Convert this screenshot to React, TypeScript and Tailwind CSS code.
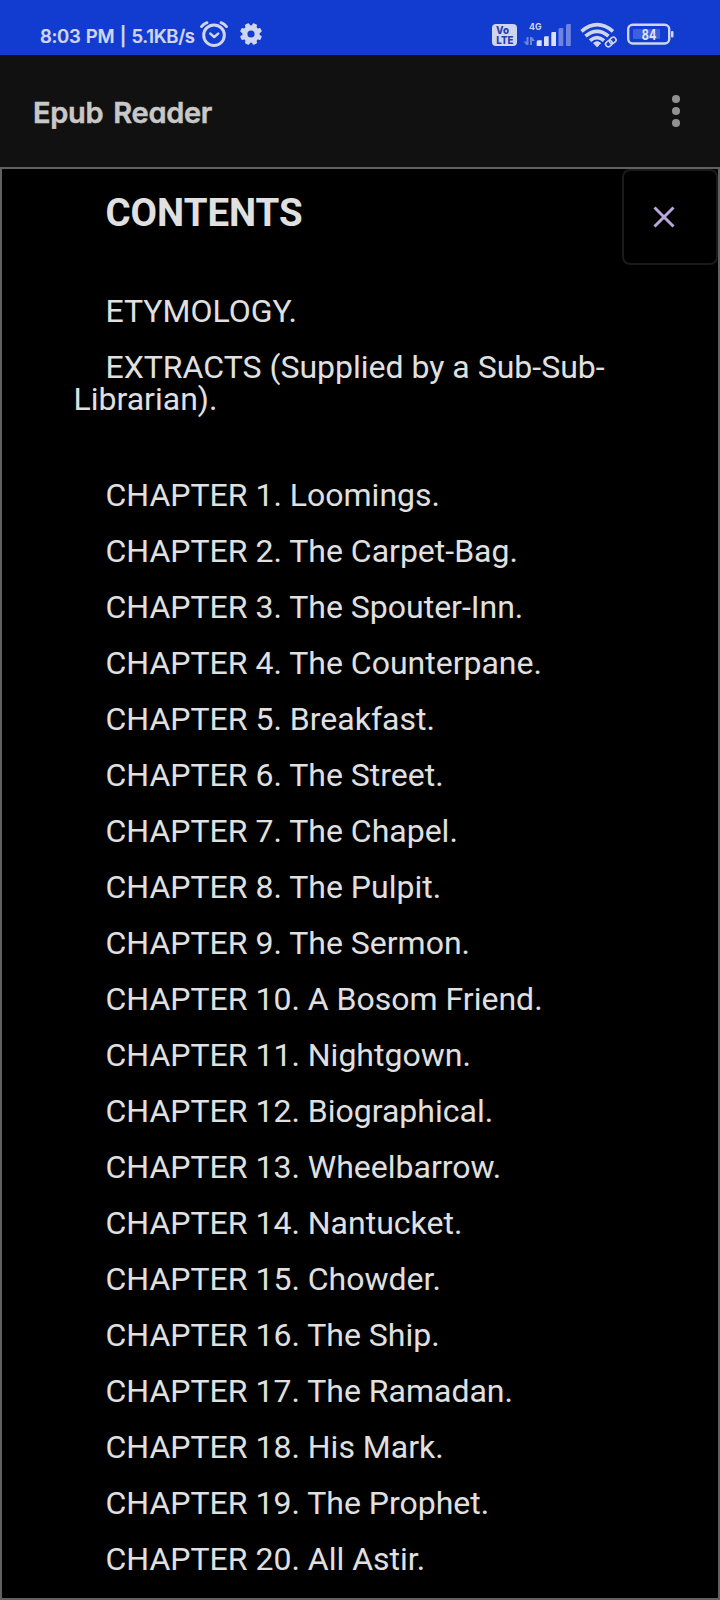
const chapters = [
  "Loomings.", "The Carpet-Bag.", "The Spouter-Inn.", "The Counterpane.", "Breakfast.",
  "The Street.", "The Chapel.", "The Pulpit.", "The Sermon.", "A Bosom Friend.",
  "Nightgown.", "Biographical.", "Wheelbarrow.", "Nantucket.", "Chowder.",
  "The Ship.", "The Ramadan.", "His Mark.", "The Prophet.", "All Astir.",
];

function AlarmIcon() {
  return (
    <svg className="ml-[5px] mt-[20px] h-[28px] w-[28px] shrink-0" viewBox="0 0 28 28" fill="none" stroke="currentColor" strokeLinecap="round">
      <circle cx="14" cy="15.2" r="10.3" strokeWidth="3" />
      <path d="M10.300 13.600l3.900 3.400 4-3.400" strokeWidth="2.500" strokeLinejoin="round" />
      <path d="M1.500 6.600Q3.500 3.800 7 2.600M26.500 6.600Q24.500 3.800 21 2.600" strokeWidth="2.800" />
    </svg>
  );
}

function GearIcon() {
  return (
    <svg className="ml-[12px] mt-[23px] h-[22px] w-[22px] shrink-0" viewBox="0 0 22 22">
      <g fill="currentColor">
        {[22.5, 67.5, 112.5, 157.5].map((a) => (
          <rect key={a} x="8.600" y="0" width="4.800" height="22" rx="1.500" transform={`rotate(${a} 11 11)`} />
        ))}
      </g>
      <circle cx="11" cy="11" r="6.200" fill="none" stroke="currentColor" strokeWidth="5" />
      <circle cx="11" cy="11" r="3.600" fill="#123bd0" />
    </svg>
  );
}

function SignalIcons() {
  return (
    <svg className="h-[55px] w-[190px]" viewBox="490 0 190 55" fill="none">
      <rect x="492" y="24" width="25" height="22" rx="4" fill="#d0d5ef" />
      <g fill="#2440ad" fontFamily="Inter, sans-serif" fontWeight="800">
        <text x="496" y="34.300" fontSize="10.500" textLength="13" lengthAdjust="spacingAndGlyphs">Vo</text>
        <text x="496.300" y="43.700" fontSize="10.500" textLength="17.200" lengthAdjust="spacingAndGlyphs">LTE</text>
      </g>
      <text x="529" y="30" fontSize="9.200" fontFamily="Inter, sans-serif" fontWeight="700" fill="#d0d5ef" textLength="12.500" lengthAdjust="spacingAndGlyphs">4G</text>
      <g fill="#6f84e0">
        <path d="M526.500 45v-8h2v8zM523.500 41.500h3l2 3.500h-2zM530 37h2v8h-2zM532 37l3 4h-3z" />
        <path d="M558.500 46V29.500q0-1.500 1.500-1.500h3.300v18zM566 46V25.500q0-1.500 1.500-1.500h3.300v22z" />
      </g>
      <path fill="#dce0f4" d="M536.700 46v-4.300q0-1.400 1.500-1.400h3.500V46zM544 46v-8.300q0-1.400 1.400-1.400h3.300V46zM551.300 46V33.300q0-1.400 1.400-1.400h3.300V46z" />
      <g stroke="#d0d5ef" strokeWidth="3.700">
        <path d="M581.500 31.300Q597 18 613 31.300" />
        <path d="M585.500 36.200Q597 26.400 608.500 36.200" />
        <path d="M590 40.700Q597 34.700 604 40.700" />
      </g>
      <path d="M593.500 43q3.700-2.800 7.200 0l-3.600 4z" fill="#d0d5ef" stroke="#d0d5ef" strokeWidth="0.800" />
      <g transform="rotate(-40 610.800 42)">
        <rect x="604" y="38" width="14" height="8" rx="4" fill="#123bd0" />
        <rect x="604.800" y="39.300" width="7" height="5.400" rx="2.700" stroke="#d0d5ef" strokeWidth="1.600" />
        <rect x="609.800" y="39.300" width="7" height="5.400" rx="2.700" stroke="#d0d5ef" strokeWidth="1.600" />
      </g>
      <rect x="628.200" y="24.700" width="41" height="18.800" rx="4.500" stroke="#d0d5ef" strokeWidth="2.400" />
      <rect x="633" y="29" width="27" height="10" rx="1" fill="#3e60dc" />
      <rect x="671" y="31" width="2.500" height="6.500" rx="1" fill="#d0d5ef" />
      <text x="641.800" y="39.700" fontSize="14" fontFamily="Inter, sans-serif" fontWeight="700" fill="#e4e7f7" textLength="14.500" lengthAdjust="spacingAndGlyphs">84</text>
    </svg>
  );
}

export default function App() {
  return (
    <div className="flex h-[1600px] w-[720px] flex-col overflow-hidden bg-black font-['Roboto',sans-serif] text-[#e0e0e0]">
      <div className="flex h-[55px] shrink-0 items-start justify-between bg-[#123bd0] pl-[40px] pr-[40px] text-[#d0d5ef]">
        <div className="flex">
          <span className="mt-[22px] w-[155px] whitespace-nowrap font-['Inter',sans-serif] text-[18.5px] font-semibold leading-[28px] tracking-[-0.35px] [font-feature-settings:'cv11'] [word-spacing:1.2px] [-webkit-text-stroke:0.2px_#d0d5ef]">
            8:03 PM | 5.1KB/s
          </span>
          <AlarmIcon />
          <GearIcon />
        </div>
        <SignalIcons />
      </div>
      <header className="flex h-[112px] shrink-0 items-center justify-between bg-[#111111] pl-[33px] pr-[40px]">
        <h1 className="mt-[4px] font-['Inter',sans-serif] text-[29px] font-semibold leading-[40px] tracking-[-0.3px] text-[#c8c8c8] [font-feature-settings:'cv11'] [word-spacing:3px] [-webkit-text-stroke:0.5px_#c8c8c8]">
          Epub Reader
        </h1>
        <div className="flex flex-col gap-1">
          <i className="size-2 rounded-full bg-[#929292]" />
          <i className="size-2 rounded-full bg-[#929292]" />
          <i className="size-2 rounded-full bg-[#929292]" />
        </div>
      </header>
      <main className="relative flex-1 border-2 border-[#616161] bg-black pl-[71.5px] pr-[72px]">
        <button className="absolute right-0 top-0 flex h-[96px] w-[96px] items-center justify-center rounded-lg border-2 border-[#1a1a1a] pr-[12px]" aria-label="Close">
          <svg className="h-[22px] w-[22px]" viewBox="0 0 22 22" stroke="#b8a7dc" strokeWidth="3">
            <path d="M1.500 1.500l19 19M20.500 1.500l-19 19" />
          </svg>
        </button>
        <h2 className="mt-[24px] h-[40px] indent-[32px] text-[38.4px] font-bold leading-[40px]">CONTENTS</h2>
        <div className="mt-[62px] flex flex-col gap-6 text-[32px] leading-[32px]">
          <p className="indent-[32px]">ETYMOLOGY.</p>
          <p className="indent-[32px]">EXTRACTS (Supplied by a Sub-Sub-Librarian).</p>
        </div>
        <div className="mt-[64px] flex flex-col gap-6 text-[32px] leading-[32px]">
          {chapters.map((title, i) => (
            <p key={title} className="whitespace-nowrap indent-[32px]">
              CHAPTER {i + 1}. {title}
            </p>
          ))}
        </div>
      </main>
    </div>
  );
}
